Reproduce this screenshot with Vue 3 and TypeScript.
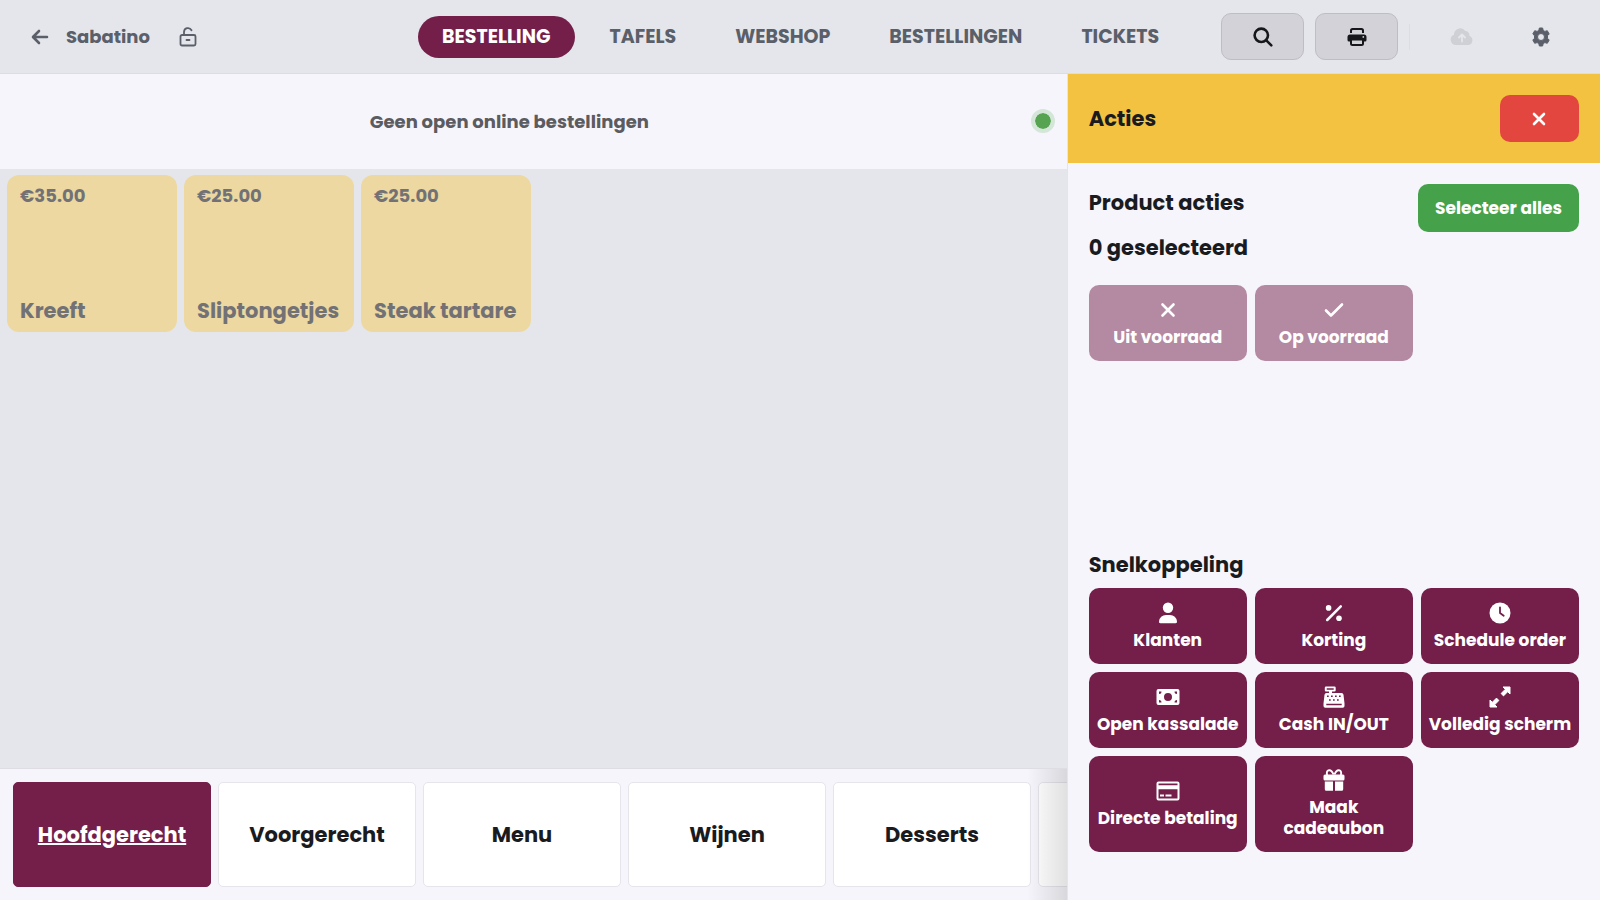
<script setup lang="ts">
import { ref } from 'vue'

interface Shortcut { label: string; icon: string }

const tabs: string[] = ['Bestelling', 'Tafels', 'Webshop', 'Bestellingen', 'Tickets']
const activeTab = ref('Bestelling')
const products = [
  { name: 'Kreeft', price: '€35.00' },
  { name: 'Sliptongetjes', price: '€25.00' },
  { name: 'Steak tartare', price: '€25.00' },
]
const categories: string[] = ['Hoofdgerecht', 'Voorgerecht', 'Menu', 'Wijnen', 'Desserts']
const activeCategory = ref('Hoofdgerecht')
const shortcuts: Shortcut[] = [
  { label: 'Klanten', icon: 'user' },
  { label: 'Korting', icon: 'percent' },
  { label: 'Schedule order', icon: 'clock' },
  { label: 'Open kassalade', icon: 'money' },
  { label: 'Cash IN/OUT', icon: 'register' },
  { label: 'Volledig scherm', icon: 'expand' },
  { label: 'Directe betaling', icon: 'card' },
  { label: 'Maak cadeaubon', icon: 'gift' },
]
</script>

<template>
  <div class="app">
    <header class="topbar">
      <div class="brand">
        <button class="plain" aria-label="Terug">
          <svg width="18" height="16" viewBox="0 0 18 16" class="line"><path d="M8 2 2 8l6 6M2.500 8H16" /></svg>
        </button>
        <span class="name">Sabatino</span>
        <button class="plain lock" aria-label="Ontgrendeld">
          <svg width="18" height="20" viewBox="0 0 18 20" class="thin"><rect x="1.500" y="8" width="15" height="10.500" rx="1.500" /><path d="M5 8V5a4 4 0 0 1 7.500-1.800M7.500 13h3" /></svg>
        </button>
      </div>
      <nav class="tabs">
        <a v-for="tab in tabs" :key="tab" href="#" :class="{ active: tab === activeTab }" @click.prevent="activeTab = tab">{{ tab }}</a>
      </nav>
      <div class="tools">
        <button class="tool" aria-label="Zoeken">
          <svg width="20" height="20" viewBox="0 0 20 20" class="line"><circle cx="8.300" cy="8.300" r="6.700" /><path d="m13.300 13.300 5 5" /></svg>
        </button>
        <button class="tool" aria-label="Afdrukken">
          <svg width="20" height="20" viewBox="0 0 20 20" fill="currentColor"><path d="M3 6V3.500A2.500 2.500 0 0 1 5.500 1h9A2.500 2.500 0 0 1 17 3.500V6h-2V3.800a.8.800 0 0 0-.8-.8H5.800a.8.800 0 0 0-.8.800V6Z" /><path fill-rule="evenodd" d="M3 7.500h14a2.500 2.500 0 0 1 2.500 2.500v3a1.500 1.500 0 0 1-1.500 1.500h-1v2a2.500 2.500 0 0 1-2.500 2.500h-9A2.500 2.500 0 0 1 3 16.500v-2H2A1.500 1.500 0 0 1 .5 13v-3A2.500 2.500 0 0 1 3 7.500Zm2 6v3.600h10v-3.600ZM16.300 9a.9.900 0 1 0 0 1.800.9.900 0 0 0 0-1.800Z" /></svg>
        </button>
        <i class="divider"></i>
        <button class="plain cloud" aria-label="Synchroniseren" disabled>
          <svg width="24" height="18" viewBox="0 0 24 18"><path fill="currentColor" d="M6 17a5.300 5.300 0 0 1-2-10.200A6.200 6.200 0 0 1 15.300 3a4 4 0 0 1 4 4.800A4.800 4.800 0 0 1 18.500 17Z" /><path d="M12 13.500V6.800M9 9.500l3-3 3 3" fill="none" stroke="#e5e6eb" stroke-width="1.800" stroke-linecap="round" stroke-linejoin="round" /></svg>
        </button>
        <button class="plain" aria-label="Instellingen">
          <svg width="20" height="20" viewBox="0 0 20 20"><path fill="currentColor" fill-rule="evenodd" d="M8.400 1h3.200l.6 2.400 1.700 1 2.400-.7L18.200 7l-1.700 1.700v2.600l1.700 1.700-1.900 3.300-2.400-.7-1.700 1-.6 2.400H8.400l-.6-2.400-1.700-1-2.400.7L1.800 13l1.700-1.700V8.700L1.800 7l1.900-3.300 2.400.7 1.700-1ZM10 6.500a3.500 3.500 0 1 0 0 7 3.500 3.500 0 0 0 0-7Z" stroke="currentColor" stroke-linejoin="round" /></svg>
        </button>
      </div>
    </header>

    <div class="body">
      <main>
        <section class="online"><p>Geen open online bestellingen</p><span class="status"></span></section>
        <section class="products">
          <button v-for="p in products" :key="p.name" class="product"><span class="price">{{ p.price }}</span><span>{{ p.name }}</span></button>
        </section>
        <nav class="categories">
          <button v-for="c in categories" :key="c" class="category" :class="{ active: c === activeCategory }" @click="activeCategory = c">{{ c }}</button>
          <button class="category" aria-label="Meer"></button>
        </nav>
      </main>

      <aside>
        <header class="panel-head">
          <h1>Acties</h1>
          <button class="close" aria-label="Sluiten"><svg width="14" height="14" viewBox="0 0 14 14" class="line"><path d="m2 2 10 10M12 2 2 12" /></svg></button>
        </header>
        <div class="panel-body">
          <div class="selection">
            <div><h2>Product acties</h2><h2>0 geselecteerd</h2></div>
            <button class="select-all">Selecteer alles</button>
          </div>
          <div class="grid">
            <button class="tile" disabled><svg width="24" height="24" viewBox="0 0 24 24" class="line"><path d="m6.500 6.500 11 11M17.500 6.500l-11 11" /></svg><span>Uit voorraad</span></button>
            <button class="tile" disabled><svg width="24" height="24" viewBox="0 0 24 24" class="line"><path d="m4 12.500 5 5L20 6.500" /></svg><span>Op voorraad</span></button>
          </div>
          <h2 class="shortcut-title">Snelkoppeling</h2>
          <div class="grid">
            <button v-for="s in shortcuts" :key="s.label" class="tile">
              <svg width="24" height="24" viewBox="0 0 24 24" fill="currentColor" aria-hidden="true">
                <g v-if="s.icon === 'user'"><circle cx="12" cy="6.700" r="5.200" /><path d="M3 20.500a7 7 0 0 1 7-6.500h4a7 7 0 0 1 7 6.500 1.500 1.500 0 0 1-1.500 1.800h-15A1.500 1.500 0 0 1 3 20.500Z" /></g>
                <g v-else-if="s.icon === 'percent'"><path d="M5.200 19 18.800 5.300" stroke="currentColor" stroke-width="2.500" stroke-linecap="round" /><circle cx="6.600" cy="6.900" r="2.800" /><circle cx="17" cy="17.300" r="2.800" /></g>
                <g v-else-if="s.icon === 'clock'"><circle cx="12" cy="12" r="10.500" /><path d="M12 6.300V12l3.700 2.700" fill="none" stroke="#731f4a" stroke-width="1.800" stroke-linecap="round" stroke-linejoin="round" /></g>
                <path v-else-if="s.icon === 'money'" fill-rule="evenodd" d="M2.500 4h19A2 2 0 0 1 23.500 6v12a2 2 0 0 1-2 2h-19a2 2 0 0 1-2-2V6a2 2 0 0 1 2-2ZM3 6.500V9a2.500 2.500 0 0 0 2.500-2.500Zm15.500 0A2.500 2.500 0 0 0 21 9V6.500ZM3 15v2.500h2.500A2.500 2.500 0 0 0 3 15Zm18 0a2.500 2.500 0 0 0-2.500 2.500H21ZM12 8a4 4 0 1 0 0 8 4 4 0 0 0 0-8Z" />
                <path v-else-if="s.icon === 'register'" fill-rule="evenodd" d="M4 1.500h8.500a1.200 1.200 0 0 1 1.200 1.200v2.600a1.200 1.200 0 0 1-1.200 1.200H10V8h9.500a2 2 0 0 1 2 1.700l1 8.800V21a1.800 1.800 0 0 1-1.800 1.800H3.300A1.800 1.800 0 0 1 1.500 21v-2.500l1-8.800A2 2 0 0 1 4.500 8H7V6.500H4a1.200 1.200 0 0 1-1.200-1.200V2.700A1.200 1.200 0 0 1 4 1.500Zm.7 1.700v1.500h7V3.200ZM5 10.500V12h1.700v-1.500Zm4 0V12h1.700v-1.500Zm4 0V12h1.700v-1.500Zm4 0V12h1.700v-1.500Zm-10 3.700v1.500h1.700v-1.500Zm4 0v1.500h1.700v-1.500Zm4 0v1.500h1.700v-1.500ZM4.300 18.800v1.500h15.400v-1.500Z" />
                <path v-else-if="s.icon === 'expand'" stroke="currentColor" stroke-linejoin="round" d="M15 2h7v7l-2.300-2.300-4.200 4.200-2.400-2.400 4.200-4.200ZM2 15l2.300 2.300 4.200-4.200 2.400 2.400-4.200 4.200L9 22H2Z" />
                <path v-else-if="s.icon === 'card'" fill-rule="evenodd" d="M2.500 2.500h19a2 2 0 0 1 2 2v15a2 2 0 0 1-2 2h-19a2 2 0 0 1-2-2v-15a2 2 0 0 1 2-2ZM2.500 4.500v1.700h19V4.500Zm0 5.800v9.200h19v-9.200ZM4 15.500h4v2H4Zm5.500 0h6v2h-6Z" />
                <g v-else><path d="M11.500 6.500C10 2.700 8.500 2 7 2.200 4.600 2.500 4.500 5 5.200 7M12.500 6.500C14 2.700 15.500 2 17 2.200c2.400.3 2.500 2.800 1.800 4.800" fill="none" stroke="currentColor" stroke-width="1.900" /><rect x="1.500" y="6.500" width="21" height="6" rx="1.500" /><path d="M2.800 13.500H11v9.300H4.300A1.500 1.500 0 0 1 2.800 21.300ZM13 13.500h8.200v7.800a1.500 1.500 0 0 1-1.500 1.500H13Z" /></g>
              </svg>
              <span>{{ s.label }}</span>
            </button>
          </div>
        </div>
      </aside>
    </div>
  </div>
</template>

<style>
body { margin: 0; }
</style>

<style scoped>
* { box-sizing: border-box; }
.app { height: 100vh; display: flex; flex-direction: column; overflow: hidden; background: #e5e6eb; color: #191b1f; font-family: Poppins, Inter, sans-serif; font-weight: 700; }
button { border: 0; padding: 0; background: none; font: inherit; color: inherit; cursor: pointer; }
h1, h2, p { margin: 0; font-weight: inherit; }
svg { display: block; flex: none; }
.line, .thin { fill: none; stroke: currentColor; stroke-width: 2.600; stroke-linecap: round; stroke-linejoin: round; }
.thin { stroke-width: 1.800; }
.topbar { height: 74px; flex: none; display: grid; grid-template-columns: 394px 1fr auto; align-items: center; border-bottom: 1px solid #dcdce1; color: #5a5f69; font-size: 19px; }
.brand { display: flex; align-items: center; padding-left: 31px; gap: 17px; }
.name { font-size: 18px; }
.lock { margin-left: 12px; }
.tabs { display: flex; gap: 11px; padding-left: 24px; }
.tabs a { padding: 0 24px; line-height: 42px; border-radius: 21px; color: inherit; text-decoration: none; text-transform: uppercase; }
.tabs a.active { background: #731f4a; color: #fff; }
.tools { display: flex; align-items: center; padding-right: 49px; }
.tool { width: 83px; height: 47px; display: grid; place-items: center; margin-right: 11px; border: 1px solid #bdbdc3; border-radius: 10px; background: #d3d2d8; color: #15171a; }
.divider { width: 1px; height: 26px; background: #dddde2; }
.cloud { margin: 0 57px 0 40px; color: #cfd0d5; }
.body { flex: 1; min-height: 0; display: grid; grid-template-columns: 2fr 1fr; }
main { min-width: 0; display: flex; flex-direction: column; overflow: hidden; }
.online { height: 95px; flex: none; display: grid; grid-template-columns: 1fr auto; column-gap: 12px; align-items: center; padding: 0 12px 1px 0; background: #f6f5fb; color: #5b5b60; font-size: 18px; text-align: center; }
.status { width: 24px; height: 24px; border-radius: 50%; border: 4px solid #d4e6d8; background: #56a352; background-clip: padding-box; }
.products { flex: 1; display: flex; align-items: flex-start; gap: 7px; padding: 6px 7px; }
.product { width: 170px; height: 157px; display: flex; flex-direction: column; align-items: flex-start; justify-content: space-between; padding: 8px 13px; border-radius: 12px; background: #ecd8a0; color: #727276; font-size: 21px; line-height: 26px; white-space: nowrap; }
.price { font-size: 18px; }
.categories { position: relative; height: 132px; flex: none; display: flex; gap: 7px; padding: 13px; border-top: 1px solid #dedde3; background: #f6f5fb; }
.categories::after { content: ''; position: absolute; inset: 0 0 0 auto; width: 40px; background: linear-gradient(to right, rgba(0, 0, 0, 0), rgba(0, 0, 0, 0.12)); pointer-events: none; }
.category { width: 198px; flex: none; border: 1px solid #e6e5eb; border-radius: 5px; background: #fff; font-size: 21px; }
.category.active { border-color: #731f4a; background: #731f4a; color: #fff; text-decoration: underline; text-decoration-thickness: 2px; }
aside { display: flex; flex-direction: column; background: #f6f5fb; border-left: 1px solid #e5e4e8; }
.panel-head { height: 89px; flex: none; display: flex; align-items: center; justify-content: space-between; padding: 0 21px; background: #f2c240; }
h1, h2 { font-size: 21px; line-height: 33px; }
.close { width: 79px; height: 47px; display: grid; place-items: center; border-radius: 10px; background: #e3463e; color: #fff; }
.panel-body { flex: 1; display: flex; flex-direction: column; padding: 21px 21px 48px; }
.selection { display: flex; justify-content: space-between; align-items: flex-start; margin-bottom: 21px; }
.selection div { display: grid; gap: 12px; padding-top: 2px; }
.select-all { width: 161px; height: 48px; border-radius: 10px; background: #45a24b; color: #fff; font-size: 17px; }
.shortcut-title { margin: auto 0 7px; }
.grid { display: grid; grid-template-columns: repeat(3, minmax(0, 1fr)); gap: 8px; }
.tile { min-height: 76px; display: flex; flex-direction: column; align-items: center; justify-content: center; gap: 5px; padding: 12px 7px 13px; border-radius: 10px; background: #731f4a; color: #fff; font-size: 17px; line-height: 21px; }
.tile:disabled { background: #b489a2; }
</style>
